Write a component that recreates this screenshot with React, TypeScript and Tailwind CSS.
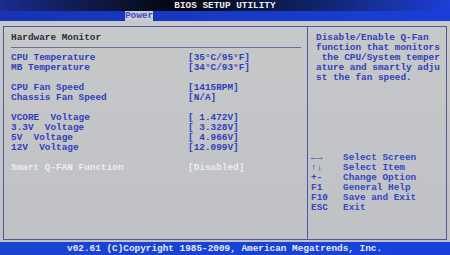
import React from "react";

const rows: ([string, string] | null)[] = [
  ["CPU Temperature", "[35°C/95°F]"],
  ["MB Temperature", "[34°C/93°F]"],
  null,
  ["CPU Fan Speed", "[1415RPM]"],
  ["Chassis Fan Speed", "[N/A]"],
  null,
  ["VCORE  Voltage", "[ 1.472V]"],
  ["3.3V  Voltage", "[ 3.328V]"],
  ["5V  Voltage", "[ 4.966V]"],
  ["12V  Voltage", "[12.099V]"],
  null,
];

const help = [
  "Disable/Enable Q-Fan",
  "function that monitors",
  " the CPU/System temper",
  "ature and smartly adju",
  "st the fan speed.",
];

const keys = [
  ["←→", "Select Screen"],
  ["↑↓", "Select Item"],
  ["+-", "Change Option"],
  ["F1", "General Help"],
  ["F10", "Save and Exit"],
  ["ESC", "Exit"],
];

export default function App() {
  return (
    <div
      className="w-[450px] h-[255px] flex flex-col overflow-hidden bg-[#c3c5c8] text-[9.4px] leading-[10px] font-bold whitespace-pre"
      style={{ fontFamily: '"Liberation Mono", "DejaVu Sans Mono", monospace' }}
    >
      {/* title */}
      <div className="h-[11px] flex items-center justify-center bg-gradient-to-r from-[#1c2c90] via-[#05060c] via-40% to-[#1d3fd8] text-[#e8ecf4]">
        BIOS SETUP UTILITY
      </div>

      {/* tab bar */}
      <div className="h-[10px] flex bg-gradient-to-r from-[#1634b4] to-[#1a3ed8] pl-[125px]">
        <div className="h-[10px] w-[28px] bg-[#c9ccd6] text-[#3a4cc0] flex items-center justify-center">
          Power
        </div>
      </div>

      {/* main */}
      <div className="flex-1 pt-[5px] px-[3px] pb-[2px] bg-gradient-to-b from-[#c6c8ca] to-[#bfc1c4]">
        <div className="h-full border border-[#4e5a98] flex">
          <div className="w-[304px] border-r border-[#4a58a8] pt-[6px] pl-[7px] pr-[6px]">
            <div className="text-[#2c2e3a]">Hardware Monitor</div>
            <div className="h-px bg-[#6a7098] mt-[4px] mb-[5px]" />
            {rows.map((r, i) =>
              r ? (
                <div key={i} className="flex text-[#2f3fbc]">
                  <div className="w-[177px]">{r[0]}</div>
                  <div>{r[1]}</div>
                </div>
              ) : (
                <div key={i} className="h-[10px]" />
              )
            )}
            <div className="flex text-[#eceef2]">
              <div className="w-[177px]">Smart Q-FAN Function</div>
              <div>[Disabled]</div>
            </div>
          </div>

          <div className="flex-1 flex flex-col pt-[6px]">
            <div className="pl-[8px] text-[#2f3fbc]">
              {help.map((l) => (
                <div key={l}>{l}</div>
              ))}
            </div>
            <div className="mt-[70px] pl-[3px] text-[#3446c4]">
              {keys.map(([k, d]) => (
                <div key={k} className="flex">
                  <div className="w-[32px]">{k}</div>
                  <div>{d}</div>
                </div>
              ))}
            </div>
          </div>
        </div>
      </div>

      {/* footer */}
      <div className="h-[13px] flex items-center pl-[67px] bg-gradient-to-r from-[#1a44d0] to-[#1640dc] text-[#e6eaf6]">
        v02.61 (C)Copyright 1985-2009, American Megatrends, Inc.
      </div>
    </div>
  );
}
